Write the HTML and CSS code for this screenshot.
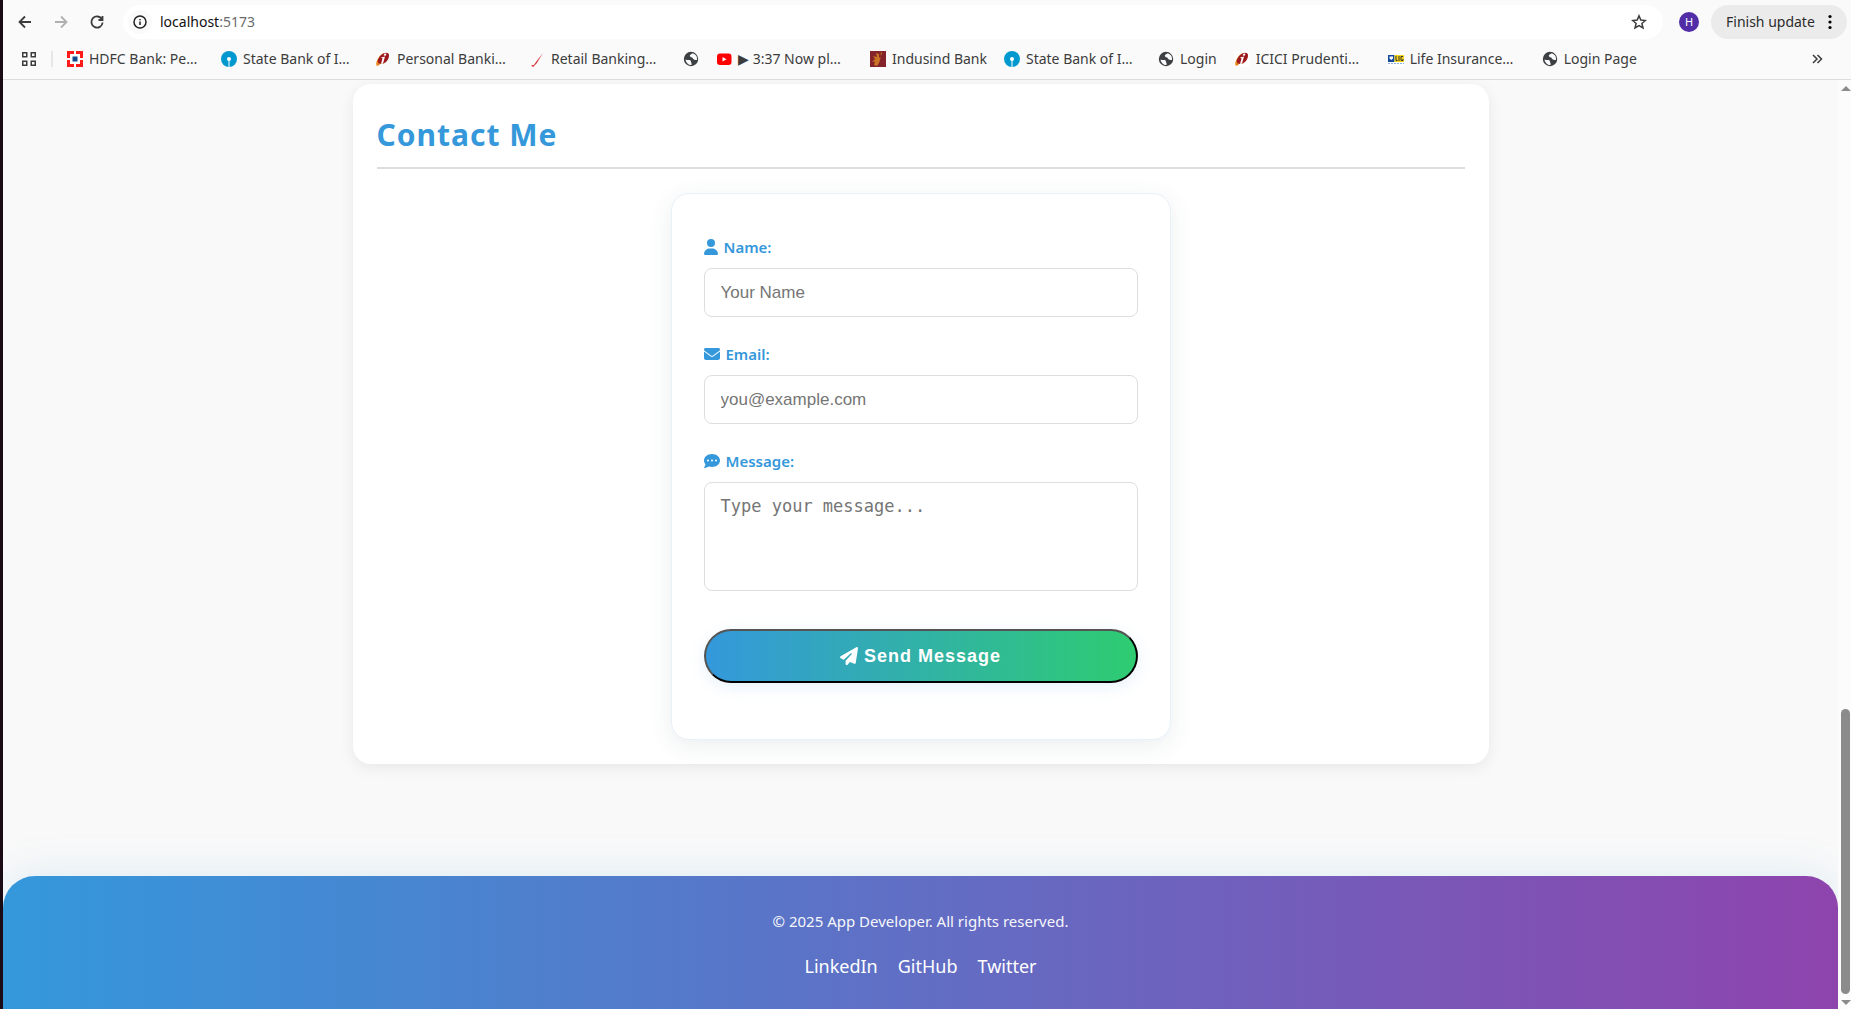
FILE: index.html
```html
<!DOCTYPE html>
<html lang="en">
<head>
<meta charset="utf-8">
<title>App Developer</title>
<link rel="stylesheet" href="styles.css">
</head>
<body>
<svg class="defs" aria-hidden="true">
  <symbol id="sbi" viewBox="0 0 16 16"><circle cx="8" cy="8" r="8" fill="#0099cf"/><circle cx="8" cy="8" r="2" fill="#fff"/><path d="M7.500 8h1v8h-1z" fill="#fff"/></symbol>
  <symbol id="icici" viewBox="0 0 16 16"><path d="M2 15C0 13 2 7 7 3c3-2 6-1 6.500 1 .5 3-2 7-5 8.500L6 12.500c-1 0-2 2.500-4 2.500z" fill="#e8881c"/><path d="M3 11.500C2 9 5 4 8.500 2.500 12 1 14 2 14 4.500 14 8 11 12 8 12.500c-2 .5-4 .5-5-1z" fill="#9c1a1f"/><path d="M9.500 2.500l2 .2-.8 2-2-.1zM6 6.500l4-1L8 12.500l-2 .5 1.500-5.500z" fill="#fff"/></symbol>
  <symbol id="globe" viewBox="0 0 16 16"><circle cx="8" cy="8" r="7.200" fill="#3c4043"/><path d="M2.500 8.500c2 1 4 0 5 1s0 2 1 2.300V14c-3 0-5.500-2-6-5.500zM9 2.500c-.5 1-2 1-2.200 2S8 6.200 9 6.500s.5 1.500 2 2 2 .8 3 .2C14.500 5 12 2.500 9 2.500z" fill="#fafafa"/></symbol>
</svg>
<div class="window">
  <header class="browser">
    <div class="toolbar">
      <button class="tool" aria-label="Back"><svg viewBox="0 0 16 16"><path d="M14 8H3M8 2.500L2.500 8 8 13.500"/></svg></button>
      <button class="tool disabled" aria-label="Forward"><svg viewBox="0 0 16 16"><path d="M2 8h11M8 2.500L13.500 8 8 13.500"/></svg></button>
      <button class="tool" aria-label="Reload"><svg viewBox="0 0 16 16"><path d="M13 5.500A5.600 5.600 0 1 0 13.600 8.500M13.500 2v4H9.500"/></svg></button>
      <div class="address">
        <span class="site"><svg viewBox="0 0 16 16"><circle cx="8" cy="8" r="6"/><path d="M8 7.500V11M8 5v1.300"/></svg></span>
        <span class="url">localhost<span class="port">:5173</span></span>
        <button class="star" aria-label="Bookmark"><svg viewBox="0 0 16 16"><path d="M8 1.800l1.800 4.300 4.600.4-3.500 3 1.100 4.500L8 11.600 4 14l1.100-4.500-3.500-3 4.600-.4z"/></svg></button>
      </div>
      <span class="avatar">H</span>
      <button class="update">Finish update<svg viewBox="0 0 4 16"><circle cx="2" cy="2.500" r="1.600"/><circle cx="2" cy="8" r="1.600"/><circle cx="2" cy="13.500" r="1.600"/></svg></button>
    </div>
    <nav class="bookmarks">
      <button class="apps" aria-label="Apps"><svg viewBox="0 0 16 16"><path d="M1.750 1.750h4v4h-4zM10.250 1.750h4v4h-4zM1.750 10.250h4v4h-4zM10.250 10.250h4v4h-4z"/></svg></button>
      <a href="#"><svg viewBox="0 0 16 16"><path fill="#ff1a1a" d="M0 0h16v16H0z"/><path fill="#fff" d="M3 3h10v10H3zM7 0h2v16H7zM0 7h16v2H0z"/><path fill="#114a8c" d="M5.500 5.500h5v5h-5z"/></svg><span class="clip">HDFC Bank: Pe…</span></a>
      <a href="#"><svg><use href="#sbi"/></svg><span class="clip">State Bank of I…</span></a>
      <a href="#"><svg><use href="#icici"/></svg><span class="clip">Personal Banki…</span></a>
      <a href="#"><svg viewBox="0 0 16 16"><path fill="#d9232a" d="M14 2L7.500 12.500 4 16l-2-1.500 3-.5 2-3z"/></svg><span class="clip">Retail Banking…</span></a>
      <a href="#" aria-label="Untitled"><svg><use href="#globe"/></svg></a>
      <a href="#"><svg viewBox="0 0 16 16"><rect x="1" y="2.500" width="14.500" height="11.500" rx="3" fill="#f00"/><path d="M6.500 6l4 2.200-4 2.200z" fill="#fff"/></svg><span class="clip">▶ 3:37 Now pl…</span></a>
      <a href="#"><svg viewBox="0 0 16 16"><path fill="#84232a" d="M0 0h16v16H0z"/><path d="M11 1c-1 3 1 4-1 6l-1-1V3L6 2l1 4-4-1 2 3-3 3 3-.5-1 3.500 3 1 2-3 1-3 1-4 1-3z" fill="#c87424"/></svg><span>Indusind Bank</span></a>
      <a href="#"><svg><use href="#sbi"/></svg><span class="clip">State Bank of I…</span></a>
      <a href="#"><svg><use href="#globe"/></svg><span>Login</span></a>
      <a href="#"><svg class="tile"><use href="#icici"/></svg><span class="clip">ICICI Prudenti…</span></a>
      <a href="#"><svg class="tile" viewBox="0 0 16 16"><path fill="#134a9c" d="M0 4h6.500v7H0z"/><path fill="#f7d417" d="M6.500 4H16v7H6.500z"/><path d="M1.500 5.500h3.500v2L3.300 9 1.500 7.500z" fill="#fff"/><path d="M8 5v4.500h1.500M11 5v5M15 5.500h-2v4h2V8" fill="none" stroke="#333"/><path d="M0 12.500h16" stroke="#8fb0d6" stroke-dasharray="2 1"/></svg><span class="clip">Life Insurance…</span></a>
      <a href="#"><svg><use href="#globe"/></svg><span>Login Page</span></a>
      <button class="more" aria-label="More bookmarks"><svg viewBox="0 0 12 12"><path d="M2 2l4 4-4 4M6.500 2l4 4-4 4"/></svg></button>
    </nav>
  </header>
  <div class="viewport">
    <div class="page">
      <main class="card">
        <h2>Contact Me</h2>
        <form class="form">
          <div class="field">
            <label for="name"><svg class="user" viewBox="0 0 448 512"><path d="M224 256A128 128 0 1 0 224 0a128 128 0 1 0 0 256zm-45.700 48C79.800 304 0 383.800 0 482.300C0 498.700 13.300 512 29.700 512H418.300c16.400 0 29.700-13.300 29.700-29.700C448 383.800 368.200 304 269.700 304H178.300z"/></svg>Name:</label>
            <input id="name" type="text" placeholder="Your Name">
          </div>
          <div class="field">
            <label for="email"><svg viewBox="0 0 512 512"><path d="M48 64C21.500 64 0 85.500 0 112c0 15.100 7.100 29.300 19.200 38.400L236.800 313.600c11.400 8.500 27 8.500 38.400 0L492.800 150.400c12.100-9.100 19.200-23.300 19.200-38.400c0-26.500-21.500-48-48-48H48zM0 176V384c0 35.300 28.700 64 64 64H448c35.300 0 64-28.700 64-64V176L294.400 339.200c-22.800 17.100-54 17.100-76.800 0L0 176z"/></svg>Email:</label>
            <input id="email" type="email" placeholder="you@example.com">
          </div>
          <div class="field">
            <label for="message"><svg viewBox="0 0 512 512"><path fill-rule="evenodd" d="M256 448c141.400 0 256-93.100 256-208S397.400 32 256 32S0 125.100 0 240c0 45.100 17.700 86.800 47.700 120.900c-1.900 24.500-11.400 46.300-21.400 62.900c-5.500 9.200-11.100 16.600-15.200 21.600c-10.500 12-13.600 34.600 7.300 34.600c28.700 0 57.400-9.200 81.100-20.900C124.700 447.200 155.600 432 166.600 432.500C194.900 442.600 224.700 448 256 448zM128 208a32 32 0 1 1 0 64a32 32 0 1 1 0-64zm128 0a32 32 0 1 1 0 64a32 32 0 1 1 0-64zm96 32a32 32 0 1 1 64 0a32 32 0 1 1-64 0z"/></svg>Message:</label>
            <textarea id="message" placeholder="Type your message..."></textarea>
          </div>
          <button class="send" type="button"><svg viewBox="0 0 512 512"><path d="M498.100 5.600c10.100 7 15.400 19.100 13.500 31.200l-64 416c-1.500 9.700-7.400 18.200-16 23s-18.900 5.400-28 1.600L284 427.700l-68.500 74.100c-8.900 9.700-22.900 12.900-35.200 8.100S160 493.200 160 480V396.400c0-4 1.500-7.800 4.200-10.700L331.800 202.800c5.800-6.300 5.600-16-.4-22s-15.700-6.400-22-.7L106 360.800 17.700 316.600C7.100 311.300 .3 300.700 0 288.900s5.900-22.800 16.100-28.700l448-256c10.700-6.100 23.900-5.500 34 1.400z"/></svg>Send Message</button>
        </form>
      </main>
      <footer class="footer">
        <p>© 2025 App Developer. All rights reserved.</p>
        <nav><a href="#">LinkedIn</a><a href="#">GitHub</a><a href="#">Twitter</a></nav>
      </footer>
    </div>
    <div class="scrollbar"><span class="up"></span><span class="thumb"></span><span class="down"></span></div>
  </div>
</div>
</body>
</html>
```
FILE: styles.css
```css
* { box-sizing: border-box; }

body {
  margin: 0;
  font-family: "Noto Sans", "Open Sans", sans-serif;
  background: #1a0a14;
  overflow: hidden;
}

button { font: inherit; color: inherit; }
svg { flex: none; }
.defs { display: none; }

.window {
  display: flex;
  flex-direction: column;
  height: 100vh;
  margin-left: 3px;
  background: #fafafa;
}

/* Browser chrome */
.browser {
  border-bottom: 1px solid #dcdcdc;
  font-size: 14px;
  color: #3c3c3c;
}

.toolbar {
  display: flex;
  align-items: center;
  height: 43px;
  padding: 0 4px 0 12px;
}

.tool, .star, .apps, .more {
  display: flex;
  padding: 0;
  border: 0;
  background: none;
}

.tool { justify-content: center; width: 36px; padding-right: 16px; }
.tool svg, .star svg, .site svg, .apps svg, .more svg {
  width: 16px;
  height: 16px;
  fill: none;
  stroke: #3c3c3c;
  stroke-width: 1.5;
}
.tool svg { stroke-width: 1.8; }
.tool.disabled svg { stroke: #b0b0b0; }

.address {
  display: flex;
  flex: 1;
  align-items: center;
  height: 34px;
  padding: 0 16px 0 5px;
  border-radius: 17px;
  background: #fff;
}
.site {
  display: flex;
  align-items: center;
  justify-content: center;
  width: 24px;
  height: 24px;
  margin-right: 8px;
  border-radius: 50%;
  background: #fafafa;
}
.site svg { stroke: #222; }
.url { flex: 1; color: #111; }
.port { color: #6b6b6b; }

.avatar {
  width: 20px;
  height: 20px;
  margin: 0 12px 0 16px;
  border-radius: 50%;
  background: #512da8;
  color: #fff;
  font-size: 11px;
  line-height: 20px;
  text-align: center;
}

.update {
  display: flex;
  align-items: center;
  justify-content: space-between;
  width: 136px;
  height: 34px;
  padding: 0 15px;
  border: 0;
  border-radius: 17px;
  background: #ebebeb;
  color: #2b2b2b;
}
.update svg { width: 4px; height: 16px; }

.bookmarks {
  display: flex;
  align-items: center;
  gap: 17px;
  height: 36px;
  padding: 0 28px 5px 18px;
}
.bookmarks a {
  display: flex;
  align-items: center;
  gap: 6px;
  color: inherit;
  text-decoration: none;
  white-space: nowrap;
}
.bookmarks a svg { width: 16px; height: 16px; }
.bookmarks .tile { background: #fff; }
.clip { width: 115px; }
.apps { padding-right: 14px; border-right: 2px solid #e6e6e6; margin-right: -3px; }
.more { margin-left: auto; }
.more svg { width: 12px; height: 12px; }

/* Page area and scrollbar */
.viewport {
  display: flex;
  flex: 1;
  min-height: 0;
}
.page {
  display: flex;
  flex: 1;
  flex-direction: column;
  overflow: hidden;
  background: #f9f9f9;
}
.scrollbar {
  display: flex;
  flex-direction: column;
  align-items: center;
  width: 13px;
  padding: 6px 0 4px 2px;
  background: #fcfcfc;
}
.up, .down {
  border: 5px solid transparent;
  border-top-width: 0;
  border-bottom-color: #8b8b8b;
}
.down { border-width: 5px 5px 0; border-color: #8b8b8b transparent; }
.thumb {
  width: 9px;
  height: 31%;
  margin: auto 0 6px;
  border-radius: 5px;
  background: #8b8b8b;
}

/* Contact card */
.card {
  width: calc(100% - 48px);
  max-width: 1136px;
  margin: 4px auto 112px;
  padding: 24px;
  border-radius: 18px;
  background: #fff;
  box-shadow: 0 4px 16px rgba(0, 0, 0, 0.07);
}
.card h2 {
  margin: 0 0 24px;
  padding-bottom: 5px;
  border-bottom: 2px solid #ddd;
  color: #3498db;
  font-size: 30px;
  line-height: 54px;
  letter-spacing: 1px;
}

.form {
  max-width: 500px;
  margin: 0 auto;
  padding: 40px 32px 56px;
  border: 1px solid #e6f1fa;
  border-radius: 18px;
  background: #fff;
  box-shadow: 0 6px 24px rgba(44, 62, 80, 0.09);
}
.field { margin-bottom: 24px; }
.field label {
  display: flex;
  align-items: center;
  gap: 6px;
  margin-bottom: 8px;
  color: #3498db;
  font-size: 15px;
  font-weight: 600;
  line-height: 26px;
}
.field label svg { width: 16px; height: 16px; fill: currentColor; }
.field label .user { width: 14px; }

input, textarea {
  display: block;
  width: 100%;
  padding: 14px 16px;
  border: 1px solid #ddd;
  border-radius: 8px;
  background: #fff;
  font-size: 17px;
  line-height: 19px;
}
input { height: 49px; font-family: "Liberation Sans", sans-serif; }
textarea { height: 109px; resize: none; font-family: "DejaVu Sans Mono", monospace; }
::placeholder { color: #757575; }

.send {
  display: flex;
  align-items: center;
  justify-content: center;
  gap: 6px;
  width: 100%;
  height: 54px;
  margin-top: 38px;
  border: 2px outset #000;
  border-radius: 27px;
  background: linear-gradient(90deg, #3498db, #2ecc71);
  box-shadow: 0 4px 16px rgba(52, 152, 219, 0.12);
  color: #fff;
  font: bold 18px "Liberation Sans", sans-serif;
  letter-spacing: 1px;
}
.send svg { width: 18px; height: 18px; fill: currentColor; }

/* Footer */
.footer {
  flex: 1;
  padding: 31px 24px;
  border-radius: 32px 32px 0 0;
  background: linear-gradient(90deg, #3498db, #8e44ad);
  box-shadow: 0 -4px 40px rgba(52, 152, 219, 0.13);
  color: #fff;
  text-align: center;
}
.footer p { margin: 0 0 17px; font-size: 15px; line-height: 28px; opacity: 0.95; }
.footer nav { display: flex; justify-content: center; gap: 20px; font-size: 18px; line-height: 28px; }
.footer a { color: #fff; text-decoration: none; }
```
